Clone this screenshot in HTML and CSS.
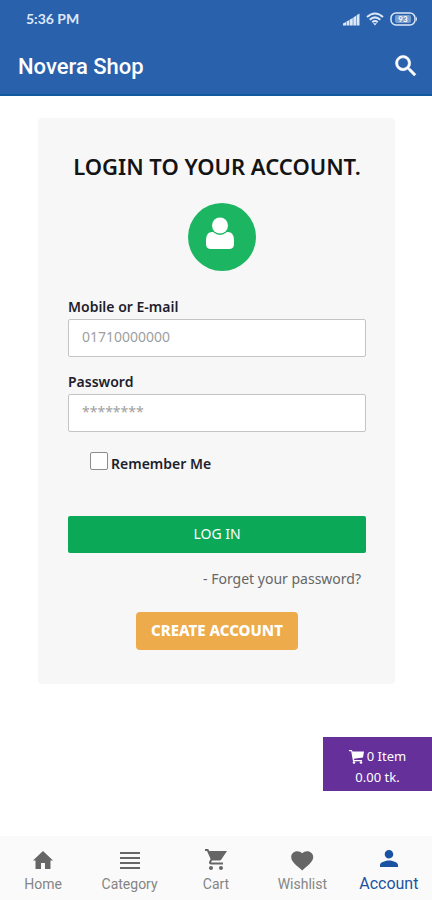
FILE: index.html
```html
<!DOCTYPE html>
<html lang="en">
<head>
<meta charset="utf-8">
<meta name="viewport" content="width=device-width, initial-scale=1">
<title>Novera Shop</title>
<link rel="stylesheet" href="styles.css">
</head>
<body>
<header class="top">
  <div class="status">
    <span>5:36 PM</span>
    <div class="status-icons">
      <svg width="17" height="13" viewBox="0 0 17 13" fill="currentColor"><path d="M0 10.500 3 9v3.500H0zM3.500 8.500l2.900-1.500v5.500H3.500zM6.900 6.500 9.800 5v7.500H6.900zM10.300 4.500l2.800-1.700v9.700h-2.800zM13.600 2.200 16.500.5v12h-2.900z"/></svg>
      <svg width="18" height="14" viewBox="0 0 18 14" fill="none" stroke="currentColor" stroke-width="2"><path d="M1 5Q9-2 17 5M3.700 7.700q5.300-4.600 10.600 0M6.300 10.200q2.700-2.300 5.400 0"/><path d="M7 11.200h4L9 13.500z" fill="currentColor" stroke="none"/></svg>
      <svg width="28" height="14" viewBox="0 0 28 14"><rect x="1" y="1" width="24" height="12" rx="5" fill="none" stroke="currentColor" stroke-width="1.500"/><rect x="5" y="3" width="16" height="8" rx="2" fill="currentColor" opacity=".45"/><path d="M26 4.500q2 2.500 0 5z" fill="currentColor"/><text x="13" y="10" text-anchor="middle" class="battery-level">93</text></svg>
    </div>
  </div>
  <div class="app-bar">
    <h1>Novera Shop</h1>
    <button class="search" type="button" aria-label="Search">
      <svg width="28" height="28" viewBox="0 0 24 24" fill="currentColor" stroke="currentColor" stroke-width=".5"><path d="M15.500 14h-.79l-.28-.27A6.470 6.470 0 0 0 16 9.500 6.500 6.500 0 1 0 9.500 16c1.610 0 3.090-.59 4.230-1.570l.27.28v.79l5 4.990L20.490 19l-4.990-5zm-6 0C7.010 14 5 11.990 5 9.500S7.010 5 9.500 5 14 7.010 14 9.500 11.990 14 9.500 14z"/></svg>
    </button>
  </div>
</header>
<main class="content">
  <form class="card">
    <h2>LOGIN TO YOUR ACCOUNT.</h2>
    <div class="avatar">
      <svg width="30" height="34" viewBox="0 0 30 34"><path d="M7 15C2.500 15 1 19 1 24v3q0 5 5 5h18q5 0 5-5v-3c0-5-1.500-9-6-9z" fill="#fff"/><circle cx="15" cy="9" r="9" fill="#1cb663"/><circle cx="15" cy="8.500" r="8" fill="#fff"/></svg>
    </div>
    <div class="field">
      <label for="login">Mobile or E-mail</label>
      <input id="login" type="text" placeholder="01710000000">
    </div>
    <div class="field">
      <label for="password">Password</label>
      <input id="password" type="password" placeholder="********">
    </div>
    <div class="remember">
      <input id="remember" type="checkbox">
      <label for="remember">Remember Me</label>
    </div>
    <button class="login" type="submit">LOG IN</button>
    <a class="forgot" href="#">- Forget your password?</a>
    <a class="create" href="#">CREATE ACCOUNT</a>
  </form>
</main>
<a class="basket" href="#">
  <span class="basket-row"><svg width="15" height="14" viewBox="0 0 15 14" fill="currentColor"><path d="M0 0h3l.4 1.500H15L14 7.500 5 8.700l.2 1.300H13v1.200H4L2.200 1.300H0z"/><circle cx="5" cy="12.500" r="1.300"/><circle cx="12" cy="12.500" r="1.300"/></svg>0 Item</span>
  <span>0.00 tk.</span>
</a>
<nav class="tabs">
  <a href="#"><svg viewBox="0 0 24 24"><path d="M10 21v-6h4v6h5.500v-8.500H22L12 3 2 12.500h2.500V21z"/></svg>Home</a>
  <a href="#"><svg viewBox="0 0 24 24"><path d="M2 4h20v2H2zm0 5h20v2H2zm0 5h20v2H2zm0 5h20v2H2z"/></svg>Category</a>
  <a href="#"><svg viewBox="0 0 24 24"><path d="M7 18c-1.100 0-1.990.9-1.990 2S5.900 22 7 22s2-.9 2-2-.9-2-2-2zM1 1v2h2l3.600 8-1.350 2.500c-.16.280-.25.610-.25.960 0 1.100.9 2 2 2h12v-2H7.420c-.14 0-.25-.11-.25-.25l.03-.12.900-1.630h7.450c.75 0 1.410-.41 1.750-1.030L23 3H5.210l-.94-2H1zm16 17c-1.100 0-1.990.9-1.990 2s.89 2 1.990 2 2-.9 2-2-.9-2-2-2z"/></svg>Cart</a>
  <a href="#"><svg viewBox="0 0 24 24"><path transform="translate(-1 0) scale(1.100 1.050)" d="m12 21.350-1.450-1.320C5.400 15.360 2 12.280 2 8.500 2 5.420 4.420 3 7.500 3c1.740 0 3.410.81 4.500 2.090C13.090 3.810 14.760 3 16.500 3 19.580 3 22 5.420 22 8.500c0 3.780-3.400 6.860-8.550 11.540z"/></svg>Wishlist</a>
  <a class="active" href="#" aria-current="page"><svg viewBox="0 0 24 24"><path d="M12 10.500c2.400 0 4.300-1.900 4.300-4.200S14.400 2 12 2 7.700 3.900 7.700 6.300s1.900 4.200 4.300 4.200zm0 2c-3 0-9 1.500-9 4.500V19h18v-2c0-3-6-4.500-9-4.500z"/></svg>Account</a>
</nav>
</body>
</html>
```
FILE: styles.css
```css
* { box-sizing: border-box; }

body {
  margin: 0;
  min-height: 100vh;
  display: flex;
  flex-direction: column;
  background: #fff;
  color: #1e1e2c;
  font-family: "Noto Sans", sans-serif;
  font-size: 14px;
  line-height: 20px;
}

a { color: inherit; text-decoration: none; }
button { border: 0; font: inherit; cursor: pointer; }
svg { display: block; }

.top {
  background: #2a61ac;
  border-bottom: 2px solid #1359a0;
  color: #fff;
}

.status {
  display: flex;
  justify-content: space-between;
  align-items: center;
  height: 38px;
  padding: 0 14px 0 26px;
  color: #dce8f8;
  font-family: Lato, sans-serif;
  font-weight: 700;
}

.status-icons { display: flex; align-items: center; gap: 6px; }
.battery-level { fill: #fff; font-size: 8px; }

.app-bar {
  display: flex;
  justify-content: space-between;
  align-items: center;
  height: 56px;
  padding: 0 12px 0 18px;
}

.app-bar h1 {
  margin: 0;
  padding-top: 2px;
  font-family: Roboto, sans-serif;
  font-size: 22px;
  font-weight: 500;
  line-height: 28px;
}

.search { padding: 0; background: none; color: #fff; }

.content { flex: 1; padding: 22px 37px 20px 38px; }

.card {
  display: flex;
  flex-direction: column;
  padding: 33px 29px 34px 30px;
  border-radius: 4px;
  background: #f7f7f7;
}

.card h2 {
  margin: 0 0 21px;
  color: #141414;
  font-size: 22px;
  font-weight: 600;
  line-height: 31px;
  text-align: center;
  white-space: nowrap;
}

.avatar {
  display: flex;
  justify-content: center;
  align-self: center;
  width: 68px;
  height: 68px;
  margin: 0 0 26px 10px;
  padding: 14px 4px 0 0;
  border-radius: 50%;
  background: #1cb663;
}

.field { display: flex; flex-direction: column; margin-bottom: 15px; }
.field label, .remember label { font-weight: 600; }
.field label { margin-bottom: 2px; }

.field input {
  width: 100%;
  height: 38px;
  padding: 0 13px 4px;
  border: 1px solid #c4c4c4;
  border-radius: 2px;
  background: #fff;
  color: #444;
  font: inherit;
}

.field input::placeholder { color: #a0a0a0; opacity: 1; }

.remember {
  display: flex;
  align-items: center;
  gap: 3px;
  margin: 5px 0 40px 22px;
}

.remember input {
  appearance: none;
  width: 18px;
  height: 18px;
  margin: 0 0 6px;
  border: 1px solid #8c8c8c;
  border-radius: 2px;
  background: #fff;
}

.remember input:checked { background: #0ba858; }

.login {
  height: 37px;
  padding: 0 0 2px;
  border-radius: 2px;
  background: #0ba858;
  color: #fff;
}

.forgot { align-self: flex-end; margin: 16px 5px 23px 0; color: #666; }

.create {
  align-self: center;
  padding: 8px 15px 10px;
  border-radius: 4px;
  background: #edab4c;
  color: #fff;
  font-size: 15px;
  font-weight: 800;
}

.basket {
  position: fixed;
  right: 0;
  bottom: 109px;
  display: flex;
  flex-direction: column;
  align-items: center;
  width: 109px;
  padding: 9px 0 3px;
  background: #65309a;
  color: #fff;
  font-size: 13px;
  line-height: 21px;
}

.basket-row { display: flex; align-items: center; gap: 3px; }

.tabs {
  display: grid;
  grid-template-columns: repeat(5, 1fr);
  height: 64px;
  padding-top: 12px;
  background: #fafafa;
  color: #858585;
  font-family: Roboto, sans-serif;
}

.tabs a { display: flex; flex-direction: column; align-items: center; gap: 2px; }
.tabs svg { width: 24px; height: 24px; fill: #666; }
.tabs .active { color: #1c52a3; font-size: 16px; }
.tabs .active svg { fill: #1c52a3; }
```
